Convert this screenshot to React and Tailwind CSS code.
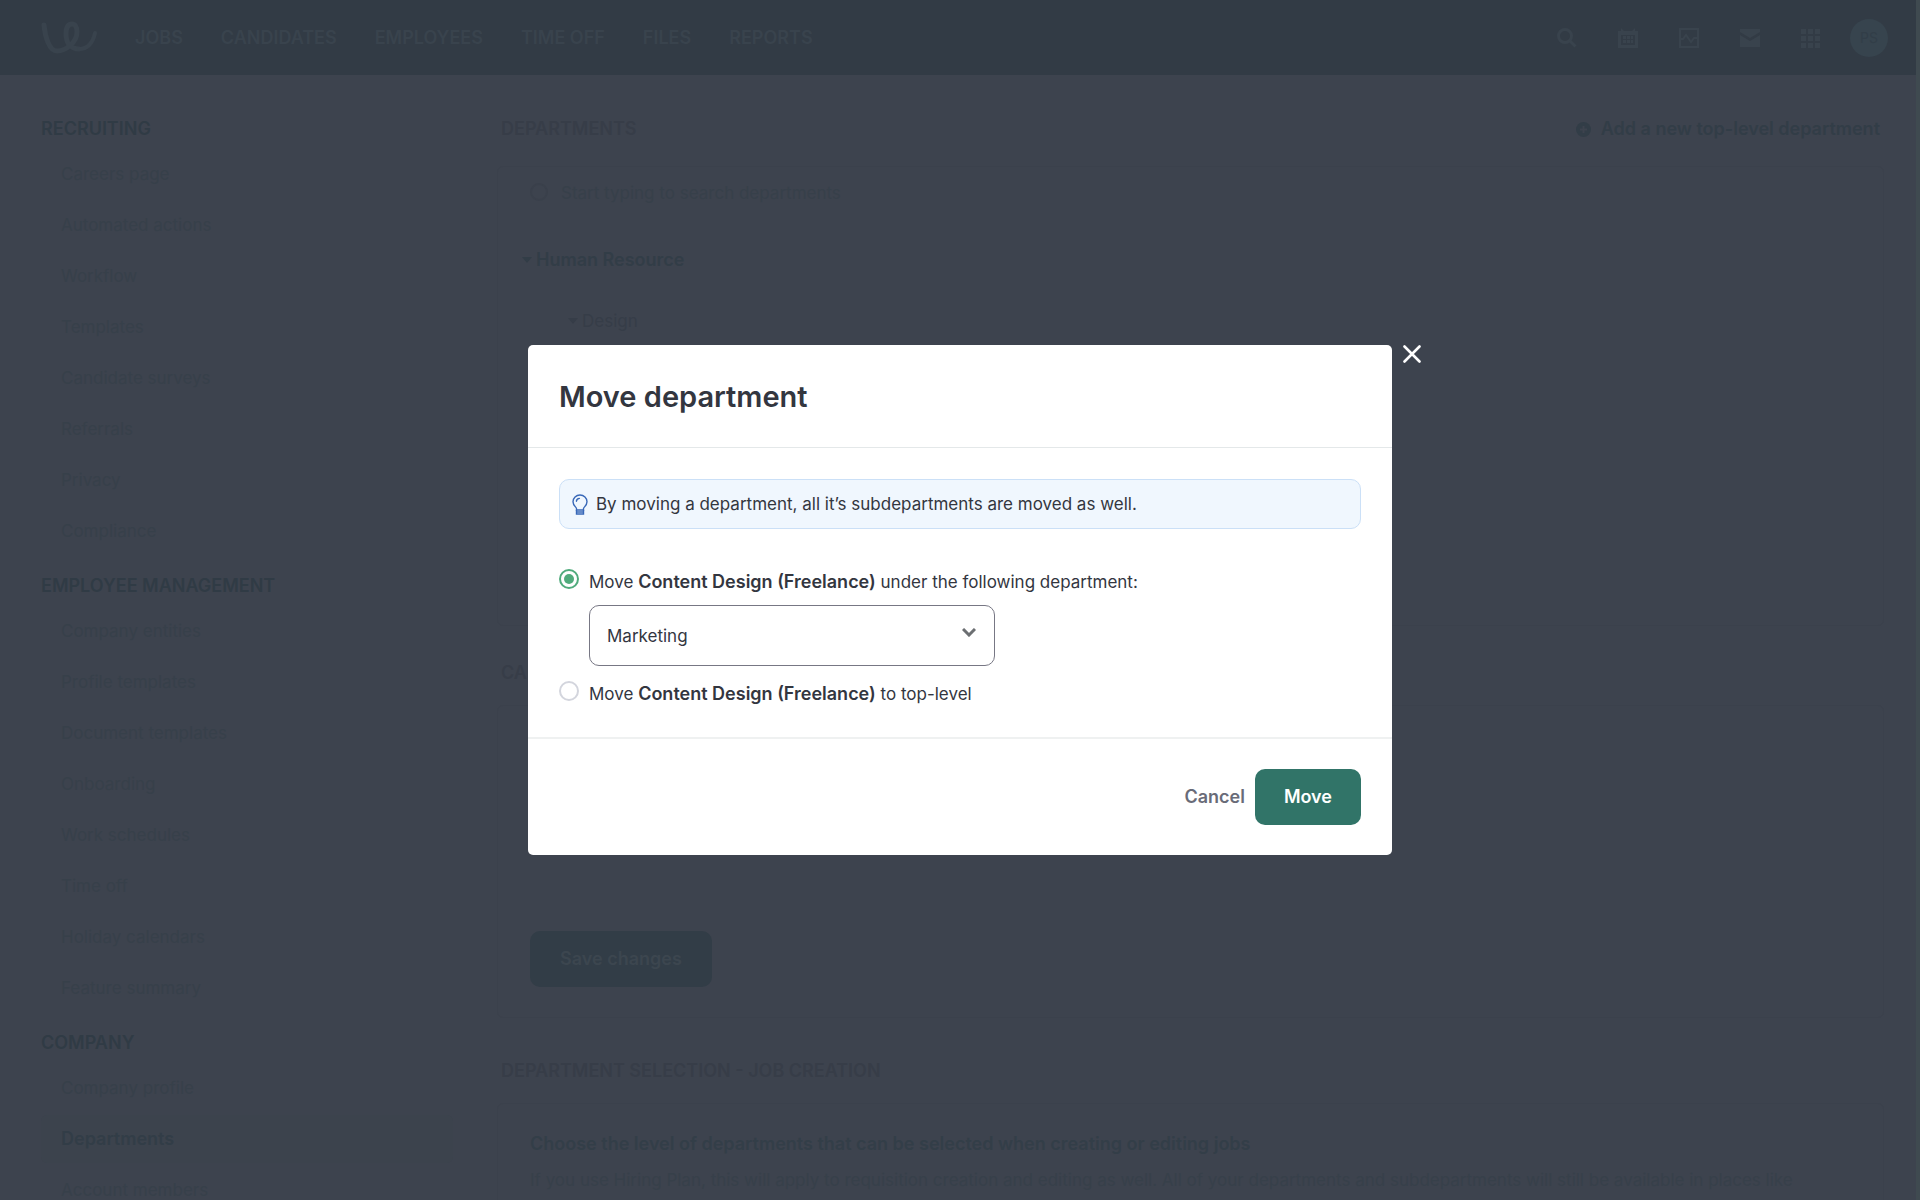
import React, { useState } from 'react';

const navItems = ['JOBS', 'CANDIDATES', 'EMPLOYEES', 'TIME OFF', 'FILES', 'REPORTS'];

const sidebar = [
  {
    title: 'RECRUITING',
    items: ['Careers page', 'Automated actions', 'Workflow', 'Templates', 'Candidate surveys', 'Referrals', 'Privacy', 'Compliance'],
  },
  {
    title: 'EMPLOYEE MANAGEMENT',
    items: ['Company entities', 'Profile templates', 'Document templates', 'Onboarding', 'Work schedules', 'Time off', 'Holiday calendars', 'Feature summary'],
  },
  {
    title: 'COMPANY',
    items: ['Company profile', 'Departments', 'Account members'],
  },
];

const Logo = () => (
  <svg width="58" height="34" viewBox="0 0 58 34" fill="none" stroke="currentColor" strokeLinecap="round" strokeLinejoin="round">
    <path d="M4 4C5 15 9 30 17 30C26 30 37 21 37 11C37 6 35 3 32 3C28 3 26 7 26 13C26 21 30 28 39 28" strokeWidth="5" />
    <path d="M39 28C49 28 53 21 55 12" strokeWidth="4" />
  </svg>
);

const SearchIcon = () => (
  <svg width="20" height="20" viewBox="0 0 20 20" fill="none" stroke="currentColor" strokeWidth="3">
    <circle cx="8" cy="8" r="6.5" />
    <path d="M12.5 12.5L18.5 18.5" />
  </svg>
);

const CalendarIcon = () => (
  <svg width="20" height="20" viewBox="0 0 20 20" fill="currentColor">
    <path fillRule="evenodd" d="M0 3H3V0L6 3H14L17 0V3H20V20H0V3ZM3 7V17H17V7H3Z" />
    <path d="M5 8h3v3H5zM9 8h3v3H9zM13 8h2v3h-2zM5 12h3v3H5zM9 12h3v3H9zM13 12h2v3h-2z" />
  </svg>
);

const ActivityIcon = () => (
  <svg width="20" height="20" viewBox="0 0 20 20" fill="none" stroke="currentColor" strokeWidth="2">
    <rect x="1" y="1" width="18" height="18" />
    <path d="M1 11H4L7 7L12 14L15 10H19" />
  </svg>
);

const MailIcon = () => (
  <svg width="20" height="20" viewBox="0 0 20 20" fill="currentColor">
    <path d="M0 1H20V4L10 10L0 4Z" />
    <path d="M0 7L10 13L20 7V19H0Z" />
  </svg>
);

const GridIcon = () => (
  <svg width="20" height="20" viewBox="0 0 20 20" fill="currentColor">
    <path d="M0 1h5v5H0zM7 1h5v5H7zM14 1h5v5h-5zM0 8h5v5H0zM7 8h5v5H7zM14 8h5v5h-5zM0 15h5v5H0zM7 15h5v5H7zM14 15h5v5h-5z" />
  </svg>
);

const PlusCircle = () => (
  <svg width="15" height="15" viewBox="0 0 15 15">
    <circle cx="7.5" cy="7.5" r="7.5" fill="currentColor" />
    <path d="M7.5 4V11M4 7.5H11" stroke="#3d434e" strokeWidth="2" />
  </svg>
);

const Bulb = () => (
  <svg width="16" height="21" viewBox="0 0 16 21" fill="none" stroke="#3868b8" strokeWidth="1.4">
    <path d="M4.5 16V14.5C4.5 13.2 1 11.6 1 7.7C1 3.9 4.1 1 8 1S15 3.9 15 7.7C15 11.6 11.5 13.2 11.5 14.5V16Z" />
    <path d="M4.5 16V20H11.5V16M4.5 18H11.5" />
    <path d="M4.4 7.2C4.6 5.6 5.8 4.6 7.4 4.4" strokeLinecap="round" />
  </svg>
);

const Caret = () => (
  <svg width="10" height="6" viewBox="0 0 10 6" fill="currentColor">
    <path d="M0 0H10L5 6Z" />
  </svg>
);

const TopBar = () => (
  <header className="h-[75px] shrink-0 bg-[#323b45] text-[#39434d] flex items-center justify-between pl-10 pr-8">
    <div className="flex items-center">
      <a href="#" aria-label="Home"><Logo /></a>
      <nav className="flex items-center gap-[38px] ml-[37px] text-[18px] leading-6 font-semibold">
        {navItems.map((item) => (
          <a key={item} href="#">{item}</a>
        ))}
      </nav>
    </div>
    <div className="flex items-center gap-[41px]">
      <button aria-label="Search"><SearchIcon /></button>
      <button aria-label="Calendar"><CalendarIcon /></button>
      <button aria-label="Activity"><ActivityIcon /></button>
      <button aria-label="Inbox"><MailIcon /></button>
      <button aria-label="Apps"><GridIcon /></button>
      <button className="w-[38px] h-[38px] -ml-3 rounded-full bg-[#37444e] text-[#323e48] text-[14px]">PS</button>
    </div>
  </header>
);

const Sidebar = () => (
  <aside className="w-[412px] shrink-0 text-[17px] leading-6">
    {sidebar.map((group) => (
      <section key={group.title} className="pb-[9px]">
        <h2 className="h-10 pt-[9px] text-[18px] font-semibold text-[#303b45]">{group.title}</h2>
        <ul>
          {group.items.map((item) => (
            <li key={item} className="h-[51px] flex items-center">
              <a
                href="#"
                className={item === 'Departments'
                  ? 'flex-1 px-5 py-3 rounded-md bg-[#3c434d] text-[18px] font-semibold text-[#323d47]'
                  : 'flex-1 px-5 py-3 text-[#37404a]'}
              >
                {item}
              </a>
            </li>
          ))}
        </ul>
      </section>
    ))}
  </aside>
);

const Main = () => (
  <main className="flex-1 min-w-0 text-[18px] leading-6">
    <div className="flex items-center justify-between h-6 mt-[9px] pl-1 pr-1">
      <h2 className="font-semibold text-[#373d48]">DEPARTMENTS</h2>
      <button className="flex items-center gap-2.5 font-semibold text-[#323d47]">
        <PlusCircle />
        Add a new top-level department
      </button>
    </div>

    <div className="h-[460px] mt-[25px] border border-[#3b414c] rounded-md">
      <label className="flex items-center gap-3 h-[51px] pl-8 text-[17px] text-[#3a404b]">
        <svg width="19" height="19" viewBox="0 0 19 19" fill="none" stroke="currentColor" strokeWidth="2">
          <circle cx="9" cy="9" r="8" />
        </svg>
        <input type="text" placeholder="Start typing to search departments" className="flex-1 bg-transparent outline-none placeholder:text-[#37404a]" />
      </label>
      <div className="flex items-center gap-1 h-[61px] mt-[11px] pl-6 font-semibold text-[#323d47]">
        <Caret />
        Human Resource
      </div>
      <div className="flex items-center gap-1 h-[61px] pl-[70px] text-[17px] text-[#363d48]">
        <Caret />
        Design
      </div>
    </div>

    <h2 className="mt-[35px] pl-1 font-semibold text-[#373d48]">CAREERS PAGE</h2>
    <div className="h-[313px] mt-5 border border-[#3b414c] rounded-md flex items-end pl-8 pb-[30px]">
      <button className="h-14 px-[30px] rounded-[10px] bg-[#323d47] text-[#3c464f] font-semibold">Save changes</button>
    </div>

    <h2 className="mt-[41px] pl-1 font-semibold text-[#373d48]">DEPARTMENT SELECTION - JOB CREATION</h2>
    <div className="mt-5 border border-[#3b414c] rounded-md px-8 pt-7 pb-8">
      <p className="font-semibold text-[#333e48]">Choose the level of departments that can be selected when creating or editing jobs</p>
      <p className="mt-3 text-[17px] text-[#37404a]">
        If you use Hiring Plan, this will apply to requisition creation and editing as well. All of your departments and subdepartments will still be available in places like
      </p>
    </div>
  </main>
);

const radioClass = 'appearance-none shrink-0 w-5 h-5 rounded-full border-2 border-[#d3d5dd] p-[3px] bg-clip-content checked:border-[#50ab7c] checked:bg-[#50ab7c]';

const MoveModal = () => {
  const [target, setTarget] = useState('under');

  return (
    <div role="dialog" aria-label="Move department" className="relative w-[864px] bg-white rounded-[5px] text-[17px] leading-6 text-[#33363f]">
      <button aria-label="Close" className="absolute top-0 left-full ml-[11px] text-white">
        <svg width="18" height="18" viewBox="0 0 18 18" stroke="currentColor" strokeWidth="2.6" strokeLinecap="round">
          <path d="M1.5 1.5L16.5 16.5M16.5 1.5L1.5 16.5" />
        </svg>
      </button>

      <div className="h-[103px] px-[31px] pt-0.5 flex items-center border-b border-[#e4e8e9]">
        <h1 className="text-[29px] leading-9 font-semibold">Move department</h1>
      </div>

      <div className="px-[31px] pt-[31px] pb-[31px] border-b-2 border-[#eff1f1]">
        <div className="h-[50px] px-3 flex items-center gap-2 rounded-[10px] border border-[#cbe0f7] bg-[#f0f7fe]">
          <Bulb />
          <p>By moving a department, all it’s subdepartments are moved as well.</p>
        </div>

        <div className="mt-10 flex gap-2.5">
          <input type="radio" id="under" name="target" className={radioClass} checked={target === 'under'} onChange={() => setTarget('under')} />
          <div className="pt-px">
            <label htmlFor="under">
              Move <b className="text-[18px] font-semibold">Content Design (Freelance)</b> under the following department:
            </label>
            <div className="relative w-[406px] mt-[11px]">
              <select aria-label="Department" className="appearance-none w-full h-[61px] px-[17px] rounded-[10px] border border-[#777784] bg-white">
                <option>Marketing</option>
              </select>
              <svg className="absolute right-[19px] top-[23px] pointer-events-none" width="14" height="9" viewBox="0 0 14 9" fill="none" stroke="#6c6f72" strokeWidth="3">
                <path d="M1 1L7 7L13 1" />
              </svg>
            </div>
          </div>
        </div>

        <div className="mt-[15px] flex gap-2.5">
          <input type="radio" id="top" name="target" className={radioClass} checked={target === 'top'} onChange={() => setTarget('top')} />
          <div className="pt-px">
            <label htmlFor="top">
              Move <b className="text-[18px] font-semibold">Content Design (Freelance)</b> to top-level
            </label>
          </div>
        </div>
      </div>

      <div className="px-[31px] py-[30px] flex items-center justify-end gap-2.5 text-[18px] font-semibold">
        <button className="text-[#696b78]">Cancel</button>
        <button className="h-14 px-[29px] rounded-[10px] bg-[#317468] text-white">Move</button>
      </div>
    </div>
  );
};

export default function App() {
  return (
    <div className="h-screen overflow-hidden flex flex-col bg-[#3d434e] font-['Inter',sans-serif]">
      <TopBar />
      {/* page content */}
      <div className="flex-1 min-h-0 overflow-hidden flex gap-11 pl-[41px] pr-9 pt-[33px]">
        <Sidebar />
        <Main />
      </div>
      {/* modal */}
      <div className="fixed inset-0 flex items-center justify-center">
        <div className="absolute inset-y-0 right-0 w-1 bg-[#3f4a50]"></div>
        <MoveModal />
      </div>
    </div>
  );
}
